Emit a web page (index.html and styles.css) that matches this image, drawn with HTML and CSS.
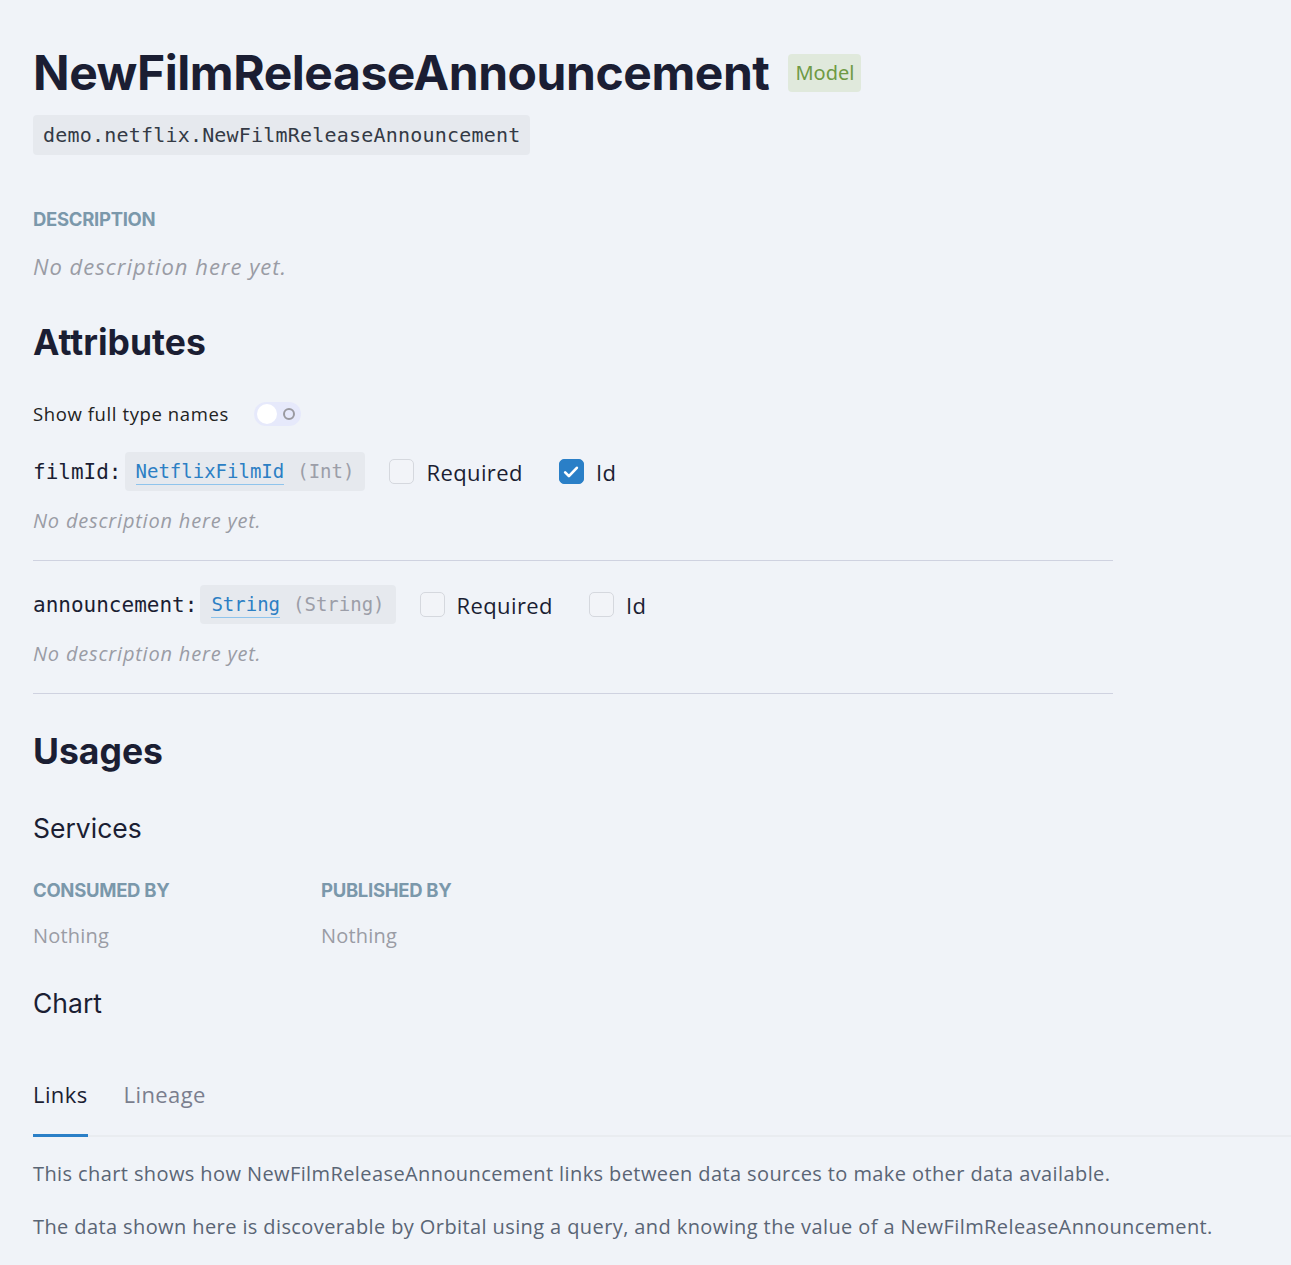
FILE: index.html
```html
<!DOCTYPE html>
<html>
<head>
<meta charset="utf-8">
<link rel="stylesheet" href="styles.css">
</head>
<body>
<main class="page">
  <div class="title-row">
    <h1 class="title">NewFilmReleaseAnnouncement</h1>
    <span class="badge">Model</span>
  </div>
  <div class="fqn">demo.netflix.NewFilmReleaseAnnouncement</div>

  <div class="label desc-label">DESCRIPTION</div>
  <p class="empty-desc">No description here yet.</p>

  <h2 class="section">Attributes</h2>
  <div class="toggle-row">
    <span>Show full type names</span>
    <span class="toggle"><span class="knob"></span><span class="ring"></span></span>
  </div>

  <div class="attr">
    <div class="attr-row">
      <span class="attr-name">filmId:</span>
      <span class="type-box"><span class="type-link">NetflixFilmId</span><span class="type-base">(Int)</span></span>
      <span class="check"><span class="box"></span>Required</span>
      <span class="check"><span class="box checked"><svg viewBox="0 0 24 24" width="20" height="20"><path d="M5 12.5l4.5 4.5L19 7" fill="none" stroke="#fff" stroke-width="3.2" stroke-linecap="round" stroke-linejoin="round"/></svg></span>Id</span>
    </div>
    <p class="attr-desc">No description here yet.</p>
  </div>

  <div class="attr">
    <div class="attr-row">
      <span class="attr-name">announcement:</span>
      <span class="type-box"><span class="type-link">String</span><span class="type-base">(String)</span></span>
      <span class="check"><span class="box"></span>Required</span>
      <span class="check"><span class="box"></span>Id</span>
    </div>
    <p class="attr-desc">No description here yet.</p>
  </div>

  <h2 class="section usages">Usages</h2>
  <h3 class="sub services">Services</h3>
  <div class="usage-grid">
    <div class="usage-col">
      <div class="label">CONSUMED BY</div>
      <div class="nothing">Nothing</div>
    </div>
    <div class="usage-col">
      <div class="label">PUBLISHED BY</div>
      <div class="nothing">Nothing</div>
    </div>
  </div>
  <h3 class="sub chart">Chart</h3>

  <div class="tabs">
    <span class="tab active">Links</span>
    <span class="tab">Lineage</span>
  </div>
  <div class="tab-body">
    <p>This chart shows how NewFilmReleaseAnnouncement links between data sources to make other data available.</p>
    <p>The data shown here is discoverable by Orbital using a query, and knowing the value of a NewFilmReleaseAnnouncement.</p>
  </div>
</main>
</body>
</html>
```

FILE: styles.css
```css
html, body {
  margin: 0;
  padding: 0;
  background: #f0f3f8;
}
body {
  font-family: "Open Sans", "Noto Sans", sans-serif;
  color: #1b1e33;
}
.page {
  padding: 44px 0 0 33px;
}
.title-row {
  display: flex;
  align-items: center;
  gap: 19px;
}
.title {
  margin: 0;
  font-family: "Inter", sans-serif;
  font-weight: 700;
  font-size: 48px;
  letter-spacing: -0.45px;
  line-height: 58px;
  color: #1b1e33;
}
.badge {
  background: #e0e9dc;
  color: #6f9a44;
  font-family: "Noto Sans", sans-serif;
  font-size: 20px;
  padding: 4px 7px;
  border-radius: 4px;
  line-height: 30px;
}
.fqn {
  display: inline-block;
  margin-top: 13px;
  background: #e6e9ee;
  border-radius: 4px;
  padding: 8px 10px;
  font-family: "DejaVu Sans Mono", monospace;
  font-size: 20px;
  letter-spacing: 0.2px;
  line-height: 24px;
  color: #343a45;
}
.label {
  font-family: "Inter", sans-serif;
  font-weight: 700;
  font-size: 18.5px;
  color: #7b98ab;
  letter-spacing: -0.3px;
}
.desc-label {
  margin-top: 53px;
}
.empty-desc {
  margin: 21px 0 0 0;
  font-style: italic;
  font-size: 22px;
  letter-spacing: 1px;
  color: #9a9ca5;
}
.section {
  margin: 40px 0 0 0;
  font-family: "Inter", sans-serif;
  font-weight: 700;
  font-size: 35.5px;
  color: #1b1e33;
}
.toggle-row {
  display: flex;
  align-items: center;
  gap: 25px;
  margin-top: 37px;
  font-size: 18.5px;
  letter-spacing: 0.6px;
  color: #222;
}
.toggle {
  width: 47px;
  height: 24px;
  border-radius: 12px;
  background: #e6e9fb;
  display: inline-flex;
  align-items: center;
  padding: 0 3px;
  box-sizing: border-box;
  gap: 6px;
}
.knob {
  width: 20px;
  height: 20px;
  border-radius: 50%;
  background: #fff;
}
.ring {
  width: 8px;
  height: 8px;
  border: 2px solid #9a9aa0;
  border-radius: 50%;
}
.attr {
  width: 1080px;
  border-bottom: 1px solid #cfd2e0;
}
.attr-row {
  display: flex;
  align-items: center;
  margin-top: 26px;
}
.attr + .attr .attr-row {
  margin-top: 24px;
}
.attr-name {
  font-family: "DejaVu Sans Mono", monospace;
  font-size: 21px;
  color: #1b1e33;
  margin-right: 3px;
}
.type-box {
  background: #e6e9ee;
  border-radius: 4px;
  padding: 6px 11px;
  font-family: "DejaVu Sans Mono", monospace;
  font-size: 19px;
  line-height: 26px;
  display: inline-flex;
  gap: 13px;
  margin-right: 24px;
}
.type-link {
  color: #2c7fc4;
  border-bottom: 1px solid #8fc4ec;
}
.type-base {
  color: #9c9ea8;
}
.check {
  display: inline-flex;
  align-items: center;
  gap: 12px;
  font-size: 22px;
  letter-spacing: 0.4px;
  color: #1b1e33;
  margin-right: 36px;
}
.box {
  width: 23px;
  height: 23px;
  border: 1px solid #d5d8de;
  border-radius: 5px;
  background: #f2f4f8;
  display: inline-flex;
  align-items: center;
  justify-content: center;
}
.box.checked {
  background: #2a7fc7;
  border-color: #2a7fc7;
}
.attr-desc {
  margin: 16px 0 0 0;
  padding-bottom: 26px;
  font-style: italic;
  font-size: 20px;
  letter-spacing: 0.8px;
  color: #9a9ca5;
}
.usages {
  margin-top: 36px;
}
.sub {
  margin: 0;
  font-family: "Inter", sans-serif;
  font-weight: 400;
  font-size: 26.5px;
  color: #1b1e33;
}
.services {
  margin-top: 39px;
}
.usage-grid {
  display: grid;
  grid-template-columns: 288px 288px;
  margin-top: 35px;
}
.nothing {
  margin-top: 21px;
  font-size: 20px;
  letter-spacing: 0.2px;
  color: #9a9ca5;
}
.chart {
  margin-top: 38px;
}
.tabs {
  display: flex;
  gap: 36px;
  margin-top: 60px;
  border-bottom: 2px solid #e9ecf0;
}
.tab {
  font-size: 22px;
  letter-spacing: 0.4px;
  color: #7a7e8e;
  padding-bottom: 25px;
  margin-bottom: -2px;
}
.tab.active {
  color: #1b1e33;
  border-bottom: 3px solid #2a7fc7;
}
.tab-body p {
  margin: 23px 0 0 0;
  font-size: 20px;
  letter-spacing: 0.4px;
  color: #5a6575;
}
.tab-body p + p {
  margin-top: 26px;
}
```
